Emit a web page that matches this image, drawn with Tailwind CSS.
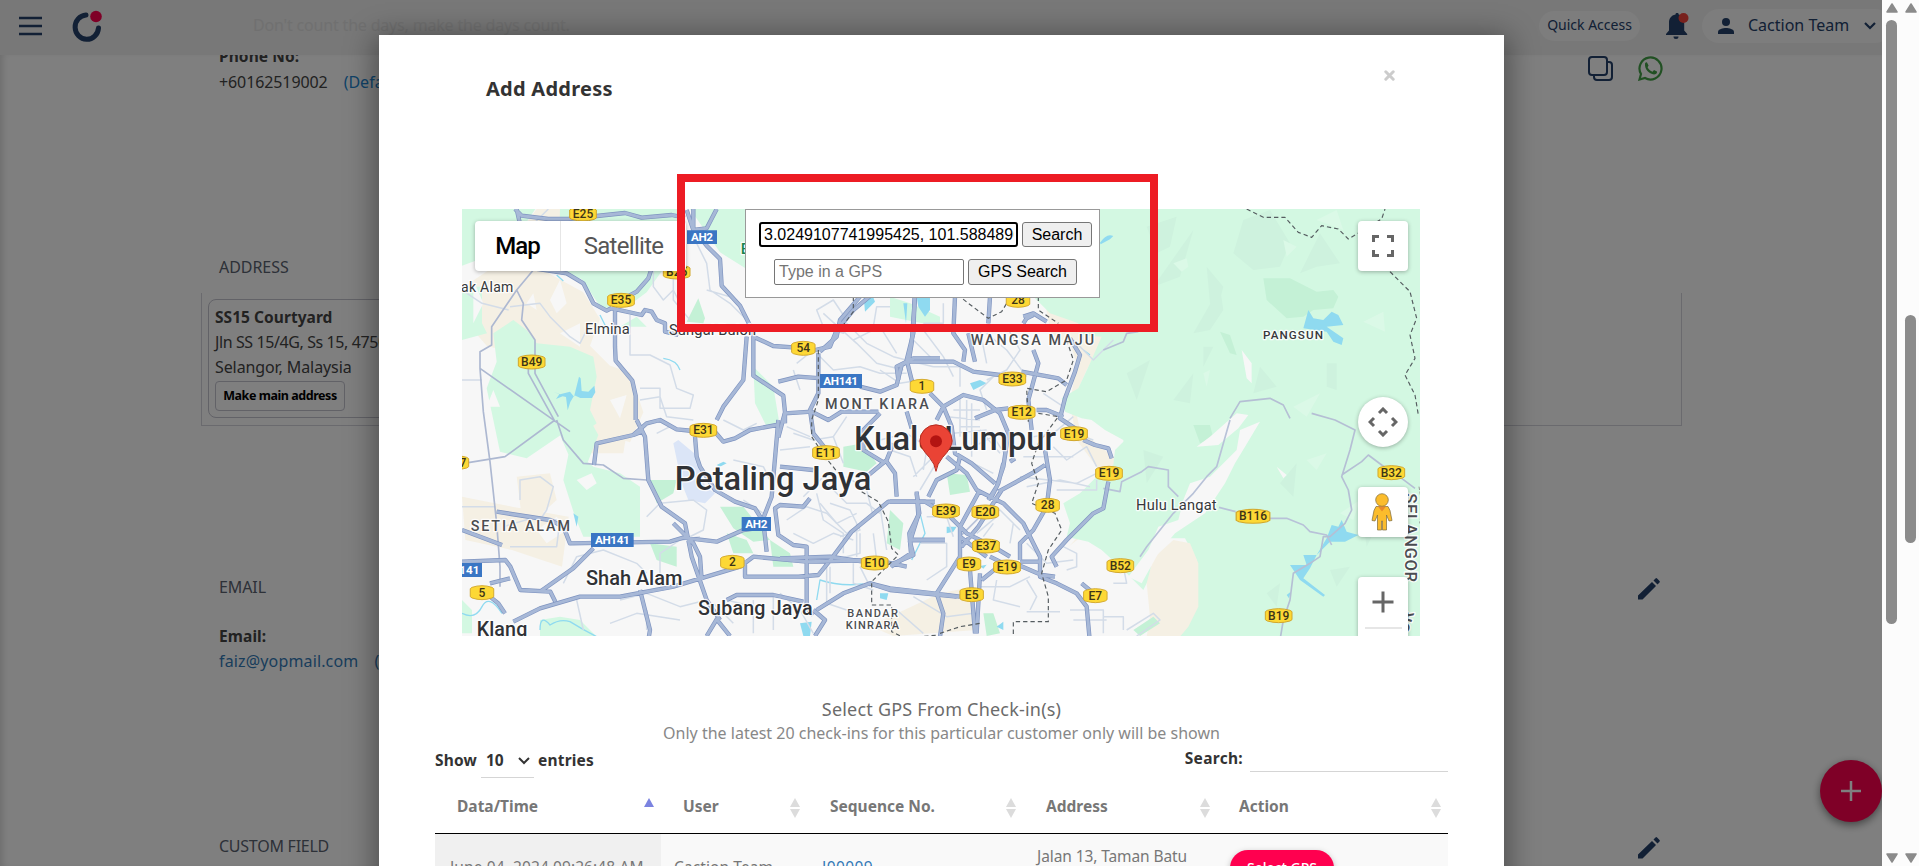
<!DOCTYPE html>
<html lang="en">
<head>
<meta charset="utf-8">
<title>Add Address</title>
<script src="https://cdn.jsdelivr.net/npm/@tailwindcss/browser@4"></script>
</head>
<body class="relative h-[866px] w-[1919px] overflow-hidden bg-white font-['Noto_Sans',sans-serif] text-base text-[#444]">
<div class="flex h-full">
  <div class="relative h-full w-[1882px] overflow-hidden bg-white">
    <!-- Page header -->
    <header class="flex h-[55px] items-center bg-[#f0f0f0] text-[#24406a]">
      <svg class="ml-[19px] mt-[-3px] h-5 w-[23px] shrink-0" viewBox="0 0 23 20"><path d="M0 2h23M0 10h23M0 18h23" stroke="#24406a" stroke-width="2.6"/></svg>
      <svg class="ml-[29px] mt-[-3px] h-[32px] w-[32px] shrink-0" viewBox="0 0 32 32"><path d="M15 5A11.7 12.2 0 1 0 27.5 18" fill="none" stroke="#24406a" stroke-width="5" stroke-linecap="round"/><circle cx="25" cy="6.5" r="5.8" fill="#ff004f"/></svg>
      <div class="ml-[150px] mt-[-5px] w-[1286px] shrink-0 whitespace-nowrap text-base tracking-[-0.18px] text-[#e1e1e1]">Don't count the days, make the days count.</div>
      <div class="mt-[-4px] flex h-[30px] w-[101px] shrink-0 items-center justify-center rounded-full bg-[#fafafa] pb-[2px] text-[14px]">Quick Access</div>
      <svg class="ml-[25px] mt-[-2px] h-[27px] w-[24px] shrink-0" viewBox="0 0 24 27"><path d="M10.500 1.500a1.600 1.600 0 0 1 3.200 0c4 1 5.500 4 5.500 8v8l3 3.500v1H1v-1l3-3.500v-8c0-4 2-7 6.500-8zM8.500 23.500h5a2.500 2.500 0 0 1-5 0z" fill="#24406a"/><circle cx="18.500" cy="5" r="5" fill="#f0433a"/></svg>
      <div class="ml-[13px] mt-[-3px] flex h-[34px] w-[190px] shrink-0 items-center rounded-full bg-[#fafafa] pl-[16px] whitespace-nowrap">
        <svg class="h-4 w-4" viewBox="0 0 16 16" fill="#24406a"><circle cx="8" cy="4" r="4"/><path d="M0 16v-2c0-3 5-4 8-4s8 1 8 4v2z"/></svg>
        <span class="ml-[14px] pb-[2px]">Caction Team</span>
        <svg class="ml-[15px] h-3 w-3" viewBox="0 0 12 12"><path d="m1 3 5 5 5-5" fill="none" stroke="#24406a" stroke-width="2.200"/></svg>
      </div>
    </header>
    <!-- Customer details -->
    <main class="flex h-[811px] justify-between overflow-hidden pl-[201px] shadow-[inset_6px_0_6px_-3px_#ddd]">
      <div class="w-[1481px] shrink-0 whitespace-nowrap">
        <div class="mt-[-11px] h-6 pl-[18px] text-[15.500px] font-bold leading-6 tracking-[0.080px]">Phone No:</div>
        <div class="flex h-[27px] items-center gap-4 pl-[18px]"><span class="tracking-[-0.1px]">+60162519002</span><span class="text-[#2185d0]">(Default)</span></div>
        <div class="mt-[160px] pl-[18px] leading-6 tracking-[-0.050px] text-[#5a6270]">ADDRESS</div>
        <div class="mt-[14px] h-[133px] border border-t-0 border-[#d5d5dc] pl-[6px] pt-[6px]">
          <div class="h-[119px] w-[600px] rounded-[8px] border border-[#c4c4cf] pl-[6px] pt-[5px] leading-[25px]">
            <div class="text-[15.500px] font-bold tracking-[0.050px]">SS15 Courtyard</div>
            <div class="tracking-[-0.400px]">Jln SS 15/4G, Ss 15, 47500</div>
            <div class="tracking-[-0.100px]">Selangor, Malaysia</div>
            <div class="mt-px flex h-[30px] w-[130px] items-center justify-center rounded border border-[#c4c4cf] pb-px text-[12.500px] font-bold tracking-[-0.450px] text-black">Make main address</div>
          </div>
        </div>
        <div class="mt-[149px] pl-[18px] leading-6 tracking-[-0.100px] text-[#5a6270]">EMAIL</div>
        <div class="mt-[25px] pl-[18px] text-[15.500px] font-bold leading-6 tracking-[0.100px]">Email:</div>
        <div class="flex gap-4 pl-[18px] pt-px leading-[25px] text-[#337ab7]"><span class="tracking-[0.150px]">faiz@yopmail.com</span><span>(Default)</span></div>
        <div class="mt-[160px] pl-[18px] leading-6 tracking-[-0.250px] text-[#5a6270]">CUSTOM FIELD</div>
      </div>
      <div class="relative w-[300px] shrink-0">
        <div class="absolute left-[-94px] top-[1px] flex gap-[25px]">
          <svg class="h-[25px] w-[25px]" viewBox="0 0 25 25" fill="none" stroke="#24406a" stroke-width="2"><rect x="1" y="1" width="18" height="18" rx="3"/><path d="M19 6h2q3 0 3 3v12q0 3-3 3H9q-3 0-3-3v-2"/></svg>
          <svg class="h-[25px] w-[25px]" viewBox="0 0 25 25"><path d="M1.500 23.500 3 18A11 11 0 1 1 7 22z" fill="none" stroke="#43a047" stroke-width="2.200"/><path d="M7 8c0-1 1-2 2-1.500l1.600 3-1 1.700c1 2 2.700 3.500 5 4.500l1.400-1.700 3 1.400c.5 2-1.500 3-3 3C11 18 6.500 13 7 8z" fill="#43a047"/></svg>
        </div>
        <svg class="absolute left-[-45px] top-[522px] h-[24px] w-[24px]" viewBox="0 0 24 24" fill="#24406a"><path d="M1 18.500 15 5l4 4L5.500 22.500H1zM16.500 3.500l2-2q.8-.8 1.600 0l2.400 2.400q.8.800 0 1.600l-2 2z"/></svg>
        <svg class="absolute left-[-45px] top-[781px] h-[24px] w-[24px]" viewBox="0 0 24 24" fill="#24406a"><path d="M1 18.500 15 5l4 4L5.500 22.500H1zM16.500 3.500l2-2q.8-.8 1.600 0l2.400 2.400q.8.800 0 1.600l-2 2z"/></svg>
      </div>
    </main>
    <div class="absolute left-[1820px] top-[760px] flex h-[62px] w-[62px] items-center justify-center rounded-full bg-[#ff004f] shadow-[0_3px_8px_#888]">
      <svg class="h-[20px] w-[20px]" viewBox="0 0 20 20"><path d="M10 0v20M0 10h20" stroke="#fff" stroke-width="2.500"/></svg>
    </div>
    <div class="absolute inset-0 bg-black/50"></div>

    <!-- Modal -->
    <section class="absolute left-[379px] top-[35px] h-[900px] w-[1125px] bg-white shadow-[0_5px_28px_4px_rgba(0,0,0,0.4)]">
      <div class="flex h-[174px] justify-between pl-[107px] pr-[109px]">
        <h2 class="mt-[40px] text-[20px] font-bold leading-7 tracking-[0.250px] text-[#333]">Add Address</h2>
        <svg class="mt-[35px] h-[11px] w-[11px]" viewBox="0 0 11 11"><path d="m1.800 1.800 7.400 7.400M9.200 1.800 1.800 9.200" stroke="#ccc" stroke-width="3" stroke-linecap="round"/></svg>
      </div>
      <div class="relative ml-[83px] h-[427px] w-[958px] overflow-hidden font-[Roboto,sans-serif]">
        <svg class="h-full w-full" viewBox="6 27 2874 1281" fill="none" stroke-linejoin="round">
          <defs>
            <g id="main">
              <path d="M165 27l20 20 80 10h60l170-18 50 14 90-8 40 8M170 27l10 45M220 205l100 15 50 30 30 60 40 22 15-8M575 205l-10 30-35 40-55 30M465 320v120l2 42 50 60 10 45v73M455 325l90 20 10-15 20 5 15 25 25 10 0 25 40 10M680 30l20 60 40-5 30-58M700 27v60l40 50 40 40 5 80 55 60 40 80v130l90 60 5 50-20 75M860 410l-10 130-60 80-20 40M880 410l60 28 70 5M1065 450l45-10 20-50 50-60 60-50M1365 290l-10 140-10 60M955 545l60-15 70 5M1200 560l60 15 50-20 15-60 35-20 80 0"/>
              <g transform="translate(0 660)"><path d="M530 0l25 50 10 130 40 80 70 50 20 100 45 130 40 60M520 45l40-35 40-10 50 28 50 5M545 35l-25 10-110 25-8 65M705 50l5 60 10 30 45 70 60 35 60 20 25 40 10 90M760 30l30 35 35-10 45-25 80-15M955 0l-20 230-35 90M960 140l100 10M1220 170l60-50 20-50M1280 125l25 35 5 70M1050 235l-20 25-70-5-15 10 10 80 45 30 40 5v185l20 20M6 330l120 45M110 275l160 25 40 20 20 50 300-5 40-12 100 12 80-35 70-10M6 425l130-5 15 20 30 70 90 5 15 30M90 490l60-15M90 530l25 20 20 30M160 605l80-40 120-35 120 0 160-30 200-60 40-30 160 15 210-5 90 20M400 385l-60 60-100 70M540 510l30 120-5 30M640 310l60 60 20 40 5 70M800 540l30-15 110 0 90 20M740 648l30-50 40 50M1070 570l80-50 80-30 60 20 200 20M1060 570l35 30-30 48M855 420v50l160 0 60-5 40-50 60-80 110-90 140 0M1355 360l100 0M1370 220l8 60-30 60 5 60-60 40"/></g>
              <g transform="translate(960 270)"><path d="M240 20l-60 70-10 50-50 45M115 190v120l-25 50 10 70 40 50M404 20l-4 110-20 80 15 60 10 30M525 20l-5 110 35 50-5 35M630 20l-5 80M565 130l20 85M355 270l-5-40 30-15 140 0 60 30 80 10M730 80l30-10 40 25M760 75l-20 10-10 15M870 145l30 50-15 50-30 80-15 60 60 40M760 180l15 40-30 110 10 90M725 245l110 20 25 20M770 360h30l50 20M585 385l60-25 40-5M450 310l40 40 25 60 10 80 50 30 70 60M470 390l20-40 60-35 60 15 50 40 25 60-15 100-20 60-25 40M910 450l35 15 40 10 10 30M985 575l-15 80-30 15-80 80-45 50 15 30M540 500l-10 40-60 30-25 50M500 500l60 50 30 50 80 40 60 60 50 100 0 60 50 20 60 30 30 40 10 110M600 600l-60 110 0 90-70 110 20 60-10 70M665 600l-70 110-50 60M540 740l80 60M670 520l-15 60-20 40M690 515l15-10M795 480l15 90-10 80-40 70-40 40 0 50M655 605l110-60 30-20M330 635h105l25 15M410 605l5 70-25 80 10 40-70 30M510 680l50 50 80 40 50 30M570 840l15 190M600 850l-10 180M605 870l50-40 60-5 70 30 40 5M720 815h60M630 800l60 30M395 750h100M0 805l150-5 100 15M270 880l60 15 130 15 80 10M15 400l0-30 80-5 50 25 40-25 110 0M380 365l15 50M300 370l-50 50 0 60 65 40M905 880l60 50"/></g>
            </g>
            <g id="shield"><path d="M-34-16Q0-26 34-16L40-12V12L34 16Q0 26-34 16L-40 12V-12Z" fill="#fdd835" stroke="#d2a72c" stroke-width="3"/></g>
          </defs>
          <path d="M0 20h2900v1300H0z" fill="#f7f7f7"/>
          <!-- Sandy ground -->
          <g fill="#f5f0e4">
            <path d="M230 27h120l-10 60-80 130 110 60 50 80-30 80 60 60 60 20 40 120-40 90-130-40 20-150-180-60-140-40-70-80 6-100 90-60zM6 890l150 30 170 30-20 150-150-50-140-30zM1100 27h400v200h-200zM170 830l100-10 20 80-100 90zM350 680l150 20-10 60-130 0z"/>
            <path d="M1750 280l80 60 100 20 0 60-50 90-40 90 20 90 100 80 60 80-40 80-90 60-90 70-20-60 60-140-20-200zM1440 1180l100-20 10 130-250 18-70-30z"/>
          </g>
          <path d="M1760 400l70 30 20 60-20 120 20 110 60 80 30 90-60 90-80 90h-80V400z" fill="#f7f7f7"/>
          <!-- Woods and parks -->
          <g fill="#d3f8e2">
            <path d="M1910 20h970v1300h-730l20-70 40-60v-110l-35-65-50 0-50 60-5 55-20 40-60-60-65-60-40-25-65-15 10-40-20-60 50-30 50-50 50-35 5-45 25-25V720l-55-30-40-30-30-5-50-20-10-40 50-30 35-75 35-80-65-5-5-35-85-30-60-60z"/>
            <path d="M6 27h220l-40 60-45 20-80 70-55 20zM6 260l60 0 0 110 15 30-75 20zM300 27h370l-60 180-50 70-40 30-95 20-60-90-70-20zM100 400l60-40 40 30 30 40 100 10 70 30 10 60-20 100 20 40-40 30-60 0-110 75-80-20-40-190 30-80zM270 660h120l25 45-35 90-50-20-30-70zM330 740l70 60 80 20 60 40v150H370l-25-60-35-110z"/>
            <path d="M880 500l60 60 20 120-40 0-35-70zM690 27h170v180l-80-50zM480 380l50-30 30 30zM240 1260l60-10 60 10 50 50H240zM6 1200l30 30v70H6zM1290 290l60 20 90 40 0 30-150-30z"/>
          </g>
          <path d="M2060 1150l20-75 60-55 50 10 25 60v130l-30 60-25 30-100 0 10-60z" fill="#f5f0e4"/>
          <g fill="#c4f1d6">
            <path d="M715 295l20 60-5 15-50-5zM570 840h80l-10 40-50 30zM780 920l70 0 80 100-50 5-60-40zM800 1000l60 20 20 40-60 0zM570 1030l80 10 0 60-60-20zM930 1020l60 40 10 40-60 0zM1150 740l60-10 40 60-30 25-70-15zM1290 930l40 40-10 80-40-20z"/>
            <path d="M2410 235l80 0 80 40 50-5 15 20-15 35-60 5-30 20-50 5-60-55zM2280 395l30 10 20 60-20-5zM2200 675l50 0 10 40-40 15zM1460 820l60 5 10 50-60 10zM2020 1290l60-40 20 20-60 38zM1570 1240l30 0 20 60-40 8z"/>
          </g>
          <!-- Relief shading -->
          <g fill="#cef2de">
            <path d="M2060 80l90-30-20 90-40 20zM2080 260l120-170-40 140zM2240 200l50 60-20 80-20-30zM2200 400l80-140 10 70-40 60zM2350 60l80-30 60 100-30 70-80 10-60-50zM2520 220l60-120 60 90-70 10zM2000 520l70-40-40 120zM2140 600l60-80-10 90zM2230 440l30 0-30 60zM2400 500l50 60-70 20zM2600 490l30 0 0 80-30-10zM2050 750l60 20-50 80zM2700 900l60 60-40 80zM2460 850l50-60-10 100zM2610 1110l60-10-40 60zM2420 1180l40-30-10 70z"/>
          </g>
          <g fill="#dbf9e7">
            <path d="M2140 190l40-15 5 25-20 15zM2470 120l40 20-30 30zM2570 60l60-30 20 60zM2710 365l60-30 5 60zM2500 620l80-40-40 70zM2540 780l60-20-30 50zM2230 520l20-10-10 50zM2640 940l60-40-20 60z"/>
          </g>
          <path d="M2170 900l20-50 60-20 80-80 10-60 60-25-15 25-30 50-30 50-30 60-60 90-90 60-50 60-50 90-40-20 60-80 30-70 60-20zM2210 740l40-30 80-70 35 5-30 40-60 50zM2345 450l30 40v60l-15-15zM2450 800l30 25-10 10z" fill="#f7f7f7"/>
          <path d="M200 310l20-30 10 50zM270 300l30-60 20 70-30 30zM300 400l60-30 0 70zM40 240l30 70-30 60zM450 600l50-15-20 70zM350 840l45-20 15 30-30 20zM230 990l60-40 30 40-60 40zM100 570l20 50-40 0z" fill="#f7f7f7"/>
          <path d="M640 730l15-10 60 50 20 90 30 20-30 30-50-10-20-50z" fill="#dbe5f7"/>
          <!-- Water -->
          <g fill="#8fdaf0">
            <path d="M280 575l20 8 30-8 12 15 15-60 5 5 3 38 20 2 18-18 3 20-10 17-35 0-18-8-12 20-8 25-5-40-10-2-20 8 10-14zM340 940l15 10-5 30zM1020 1270l35-5-5 43h-20zM1210 280l25 0 10 25-30 30zM1330 310l12 0-4 60zM1370 290l40 0 0 40-15 20-20-30zM770 795l20-10 10 5-20 10z"/>
            <path d="M2545 330l15 25 30 5 25-25 20 10 15 30-50 5 50 35-5 20-25-10-20-30-70-10z"/>
            <path d="M2490 1095l50 0-10-30 40 0 30-50 15-40 20 5 10-20 15 35 35 10-40 20-45 0-40 40-20 40-20 30 65 50-5 5-70-50zM2480 1185l12-10-5 20zM1530 550l30-10 20 10-40 20zM1610 1280l20-15 0 25zM1460 980l30 0-10 15-20 5zM1560 1098l20-4-10 12zM1920 128q20-30 40-20l-10 10-28 15zM1260 1180l25 0-5 20-20-5z"/>
          </g>
          <path d="M610 475q40 5 50 35M290 225l20 18M420 345l30 60M6 1240q40 20 60-20t60 20M240 1290q0-50 30-15 30-20 60-10 40 25 80 45M1070 1200l10-60q60 20 130 12M1380 940l15 60-40 80M1870 450l20 15" stroke="#8fdaf0" stroke-width="4"/>
          <!-- Minor streets -->
          <g stroke="#d3dce8" stroke-width="4.500">
            <path d="M265 27l-40 40M580 200l0 60 30 40 30-30 30 60M510 345l0 120 60 0 60 30 20 70 50 20-10 40-90 0 0-60-60 0M150 320l90-10 30 40 60 60 30 20 20-40M6 270l60 40 80 20M6 540h60M700 110l40 80 10 80 60 40 60 60M640 200l0 100 50 60M740 270l70 20M1070 330l50-30 40 60-10 40-60-20zM1010 490l50-40 60 60 80-10 60 20 80 0M1020 570l-20-60M1090 340l100 90 60 60 80 20M1240 380l10-60 40 0M1180 420l80-40 50 80M540 600l60-10 20 60 80 10"/>
            <path d="M6 920h100M130 980l100-30 60 10M150 1040h140l10-80M180 900v-60l60-10 40 30-20 70-20 30M310 1150l40-80 80-20 100 40 30 30M350 1200l20 90M480 1200l80-20 100 40 80-20M450 1270l80-30 130 20M600 1150v-90l60-40 60-10M560 950l40-40 100-10 40 30-10 60-60 30M760 1210l60 60M820 780l90 20 30 60M850 900l60 40M790 660l60 30 40-20M590 700l40-20M870 990l60-20M1000 700l60 20 60-10M980 960l60-40 60 20 60 60 60-40M1070 880l20 80 60 40 0 60M1000 1000l60 30 60-30 60 20M1100 850l60 60 60 0 40 30M1200 1000l0 60-80 20M1240 1000l10 80M1100 1080l0 130 60 20M880 1200l0 100M940 1190l0 100M800 1200l80 20M960 1180l60 50 40 70M560 1230l0 60"/>
            <path transform="translate(960 270)" d="M200 100l60 60 80 40 120 30M430 120l60 80 30 60M400 150l60 60M460 230l80 0 0 60M540 320v120M520 360h80M500 380l100 10M540 410l60 0M520 430l100-10M560 330v150M575 340v160M500 420l-60 60-10 60M440 470l80-40M300 240l60 40 60-10M300 450l80-20 60 40M330 480l60 20 20 60M400 560l60-60 20 20M420 600l60-100M560 480l80-40 40 60M600 420l60 70M580 520l60 30M640 260l-40 40 20 60M620 130l60 50 60 80M600 120l20 100M680 110l40 70-40 60-60 30M760 440l60-10 60-50M730 500h150M720 560l170 20 60-30M740 590l100-20 90 20M830 600l120 0 0-30M820 470l40 40 60-40 30 60M850 420l90 30M200 560l60 40 20 80M150 640l60 20 30 60-60 20M120 640l50 60 60-30M230 700v100M300 650l20 130M420 760l80 0v70l-60 40M440 680l60 0 20 60M570 650l30 30 60-20 60 60M590 730l60-50M640 700l-30 40M660 660l40 40-10 60M740 760l60 60 80-10M850 770l40 20 0 40-30 10M600 890h90l60-30M650 870l-10 60 80 20M740 870l30 50-20 40M150 830v80M220 820l0 60 60 20M240 830l30 60M350 960l80 70M400 920l100 60 80-10M20 410l70 30M0 480l90-10M200 380l-40 60 30 80M130 560l-60 60M430 100l60 0 0-60M880 150l60 60 60-60M790 310l60 40"/>
            <path d="M1830 1230l100 0 0 70M1840 1260l100 0M1700 1235h100M1960 1150l40 0-10-50M2000 1290l80-50 20 20-70 48M1930 1250l60 0 0 40"/>
          </g>
          <!-- Secondary roads -->
          <g stroke="#adb8d1" stroke-width="5">
            <path d="M220 210l-50 60-75 110 0 55-35 20 0 50 10 130 20 150 20 185 10 130 0 60M170 270l20 40-5 50 40 60v100l70 130M205 490v30l80 145M60 505l270 190M285 660l-150 110-110 18M290 660l20 60 60 70 60 5 60 40 70 5"/>
            <path d="M1500 1010l60-60M1930 865l50 10 5-30 60-30 20-15 60 10 0 50 30 30M2310 660l-40 140-30 30-40 50-60 60-80 100-20 30M2277 922l50 13M2430 955l50 0 50 20 20 20 50 10 15 30" stroke="#b8c2d8"/>
            <path d="M2555 640l70 20 60 30-15 60-25 80 20 40 10 60-20 40-45 40-20 0-10 60-30 20-50 30-10 80-20 60-10 60-20 60M2645 825l60-40 20-20 40 30 60 40 40 30M1930 450l60-25 10-25 35-5M2310 655l30-50 90-10 40 20 20 40" stroke="#b5bfd4"/>
          </g>
          <use href="#main" stroke="#7f94c0" stroke-width="13"/>
          <use href="#main" stroke="#a7b8d7" stroke-width="9"/>
          <!-- Boundaries -->
          <g stroke="#555c60" stroke-width="3.500" stroke-dasharray="13 9">
            <path d="M1180 290l0 45-30 40M1075 450l0 150-20 60 0 50 40 60 40 50M1205 875l50 30 30 60 10 80 20 20-80 80 0 70 60 0 0 80 40 20 100-10M1475 270l50 40 60 45 40-20 30-50M1735 290l0 40 60 40M1820 420l20 60-20 60-60 35-60-10 5 100M1735 640l60 10-60 80-20 60 20 60-20 60 70 30 20 50-40 60-20 70 20 70v75h-105v75M1440 1300l60-20 60-10"/>
            <path d="M2360 27l50 25 65 0 40 45 40 15 30-35 50 10 30 30 100-60 10-30M2790 215l60 60 20 80-20 50 15 70-30 50 30 60 10 60"/>
          </g>
          <path d="M2877 860l10 60-8 50" stroke="#999" stroke-width="3" stroke-dasharray="10 5"/>
          <!-- Route shields -->
          <g font-size="36" font-weight="500" fill="#3c3417" text-anchor="middle" font-family="Roboto,sans-serif">
            <g transform="translate(369 42)"><use href="#shield"/><text y="12">E25</text></g>
            <g transform="translate(650 216)"><use href="#shield"/><text y="12">B25</text></g>
            <g transform="translate(483 301)"><use href="#shield"/><text y="12">E35</text></g>
            <g transform="translate(215 486)"><use href="#shield"/><text y="12">B49</text></g>
            <g transform="translate(1030 445)"><use href="#shield" transform="scale(.88 1)"/><text y="12">54</text></g>
            <g transform="translate(1386 559)"><use href="#shield" transform="scale(.88 1)"/><text y="12">1</text></g>
            <g transform="translate(730 691)"><use href="#shield"/><text y="12">E31</text></g>
            <g transform="translate(1098 758)"><use href="#shield"/><text y="12">E11</text></g>
            <g transform="translate(-14 788)"><use href="#shield"/><text x="23" y="12">7</text></g>
            <g transform="translate(817 1087)"><use href="#shield" transform="scale(.88 1)"/><text y="12">2</text></g>
            <g transform="translate(1244 1089)"><use href="#shield"/><text y="12">E10</text></g>
            <g transform="translate(66 1178)"><use href="#shield" transform="scale(.88 1)"/><text y="12">5</text></g>
            <g transform="translate(1674 301)"><use href="#shield" transform="scale(.88 1)"/><text y="12">28</text></g>
            <g transform="translate(1657 537)"><use href="#shield"/><text y="12">E33</text></g>
            <g transform="translate(1685 637)"><use href="#shield"/><text y="12">E12</text></g>
            <g transform="translate(1842 701)"><use href="#shield"/><text y="12">E19</text></g>
            <g transform="translate(1947 820)"><use href="#shield"/><text y="12">E19</text></g>
            <g transform="translate(1763 916)"><use href="#shield" transform="scale(.88 1)"/><text y="12">28</text></g>
            <g transform="translate(1458 933)"><use href="#shield"/><text y="12">E39</text></g>
            <g transform="translate(1576 936)"><use href="#shield"/><text y="12">E20</text></g>
            <g transform="translate(1578 1038)"><use href="#shield"/><text y="12">E37</text></g>
            <g transform="translate(1527 1092)"><use href="#shield" transform="scale(.88 1)"/><text y="12">E9</text></g>
            <g transform="translate(1641 1101)"><use href="#shield"/><text y="12">E19</text></g>
            <g transform="translate(1535 1184)"><use href="#shield" transform="scale(.88 1)"/><text y="12">E5</text></g>
            <g transform="translate(1906 1187)"><use href="#shield" transform="scale(.88 1)"/><text y="12">E7</text></g>
            <g transform="translate(1981 1097)"><use href="#shield"/><text y="12">B52</text></g>
            <g transform="translate(2379 949)"><use href="#shield" transform="scale(1.26 1)"/><text y="12">B116</text></g>
            <g transform="translate(2794 818)"><use href="#shield"/><text y="12">B32</text></g>
            <g transform="translate(2456 1247)"><use href="#shield"/><text y="12">B19</text></g>
          </g>
          <g fill="#3a76c4"><path d="M681 91h90v41h-90zM1080 522h126v42h-126zM393 999h128v42H393zM845 951h88v42h-88zM-60 1089H66v42H-60z"/></g>
          <g font-size="35" font-weight="700" fill="#fff" text-anchor="middle" font-family="Roboto,sans-serif">
            <text x="726" y="123" textLength="66">AH2</text><text x="1142" y="555" textLength="104">AH141</text><text x="457" y="1032" textLength="104">AH141</text><text x="889" y="984" textLength="66">AH2</text><text x="28" y="1122">141</text>
          </g>
          <!-- Place names -->
          <g font-family="Roboto,sans-serif" fill="#36383b" stroke="#fff" stroke-width="8" paint-order="stroke" stroke-opacity=".85">
            <text x="3" y="276" font-size="42" textLength="157">ak Alam</text>
            <text x="375" y="402" font-size="44" textLength="134">Elmina</text>
            <text x="627" y="405" font-size="44" textLength="261">Sungai Buloh</text>
            <text x="842" y="163" font-size="46" fill="#17844f" font-weight="500">B</text>
            <text x="2028" y="930" font-size="44" textLength="242">Hulu Langat</text>
            <g font-weight="500">
              <text x="1095" y="628" font-size="43" textLength="311" fill="#4b4d51">MONT KIARA</text>
              <text x="1532" y="435" font-size="43" textLength="370" fill="#4b4d51">WANGSA MAJU</text>
              <text x="2409" y="416" font-size="35" textLength="180" fill="#36383b">PANGSUN</text>
              <text x="32" y="994" font-size="43" textLength="298" fill="#4b4d51">SETIA ALAM</text>
              <text x="1162" y="1251" font-size="33" textLength="152" fill="#4b4d51">BANDAR</text>
              <text x="1157" y="1286" font-size="33" textLength="160" fill="#4b4d51">KINRARA</text>
              <text x="378" y="1155" font-size="60" textLength="289" fill="#303236">Shah Alam</text>
              <text x="714" y="1245" font-size="59" textLength="344" fill="#303236">Subang Jaya</text>
              <text x="50" y="1309" font-size="59" textLength="152" fill="#303236">Klang</text>
              <text x="644" y="870" font-size="98" textLength="590" fill="#303236">Petaling Jaya</text>
              <text x="1182" y="750" font-size="98" textLength="606" fill="#303236">Kuala Lumpur</text>
              <text transform="translate(2836 880) rotate(90)" font-size="50" textLength="266" fill="#4b4d51">SELANGOR</text>
              <text transform="translate(2842 1304) rotate(-72)" font-size="52" fill="#4b4d51">OR</text>
            </g>
          </g>
          <!-- Pin -->
          <path d="M1428 814q-3-22-20-42-28.500-30-28.500-49a48.500 48.500 0 0 1 97 0q0 19-28.500 49-17 20-20 42z" fill="#ea4335" stroke="#b52b20" stroke-width="3"/><circle cx="1428" cy="724" r="18" fill="#b31412"/>
        </svg>
        <!-- Map type control -->
        <div class="absolute left-[13px] top-[12px] flex h-[50px] items-center rounded-sm bg-white text-[24px] shadow-[0_1px_4px_rgba(0,0,0,0.300)]">
          <span class="flex h-full w-[86px] items-center justify-center border-r border-[#e6e6e6] font-medium tracking-[-0.900px] text-black">Map</span>
          <span class="w-[125px] text-center tracking-[-0.700px] text-[#565656]">Satellite</span>
        </div>
        <!-- Map buttons -->
        <div class="absolute left-[896px] top-[12px] flex h-[50px] w-[50px] items-center justify-center rounded-sm bg-white shadow-[0_1px_4px_rgba(0,0,0,0.300)]">
          <svg class="h-6 w-6" viewBox="0 0 24 24" fill="none" stroke="#666" stroke-width="3"><path d="M2.500 8V2.500H8M16 2.500h5.500V8M21.500 16v5.500H16M8 21.500H2.500V16"/></svg>
        </div>
        <div class="absolute left-[896px] top-[188px] flex h-[50px] w-[50px] items-center justify-center rounded-full bg-white shadow-[0_1px_4px_rgba(0,0,0,0.300)]">
          <svg class="h-[30px] w-[30px]" viewBox="0 0 30 30" fill="none" stroke="#666" stroke-width="3"><path d="m11 6 4-4 4 4M11 24l4 4 4-4M6 11l-4 4 4 4M24 11l4 4-4 4"/></svg>
        </div>
        <div class="absolute left-[896px] top-[278px] flex h-[50px] w-[50px] items-center justify-center rounded-sm bg-white pr-[2px] shadow-[0_1px_4px_rgba(0,0,0,0.300)]">
          <svg class="h-[38px] w-[22px]" viewBox="0 0 22 38" fill="#fbbc2c" stroke="#7d6a3c" stroke-width=".7"><path d="M5 13.500h12l2 4 2 10-3 .5-2.500-6V37h-4v-9h-1v9h-4V22l-2.500 6-3-.5 2-10z"/><circle cx="11" cy="7" r="6.300"/><path d="M7 13.500h8l-4 5z" fill="#e8892a" stroke="none"/></svg>
        </div>
        <div class="absolute left-[896px] top-[368px] flex h-[100px] w-[50px] flex-col items-center rounded-sm bg-white shadow-[0_1px_4px_rgba(0,0,0,0.300)]">
          <svg class="mt-[14px] h-[22px] w-[22px] shrink-0" viewBox="0 0 22 22"><path d="M11 .5v21M.5 11h21" stroke="#666" stroke-width="3"/></svg>
          <div class="mt-[14px] h-[2px] w-[37px] bg-[#e6e6e6]"></div>
        </div>
        <!-- Search box -->
        <div class="absolute left-[283px] top-0 flex h-[89px] w-[355px] flex-col items-center border border-[#999] bg-white pl-[6px] font-['Liberation_Sans',sans-serif] text-[16px] text-black">
          <div class="mt-[12px] flex h-[25px] gap-1">
            <div class="w-[259px] rounded-[3px] border-2 border-black pl-[3px] pr-[2px] leading-[21px] whitespace-nowrap"><div class="overflow-hidden">3.0249107741995425, 101.58848966</div></div>
            <div class="flex w-[70px] items-center justify-center rounded-[3px] border border-[#767676] bg-[#efefef]">Search</div>
          </div>
          <div class="mt-[12px] flex h-[26px] gap-1">
            <div class="w-[190px] rounded-[2px] border border-[#767676] pl-[4px] leading-[24px] text-[#757575]">Type in a GPS</div>
            <div class="flex w-[109px] items-center justify-center rounded-[3px] border border-[#767676] bg-[#efefef]">GPS Search</div>
          </div>
        </div>
      </div>

      <div class="px-[56px]">
        <div class="mt-[60px] text-center text-[18px] leading-[26px] tracking-[0.200px] text-[#6b6b6b]">Select GPS From Check-in(s)</div>
        <div class="pt-px text-center text-[16px] leading-[20px] text-[#888]">Only the latest 20 check-ins for this particular customer only will be shown</div>
        <div class="flex h-[46px] justify-between text-[15.500px] font-bold text-[#333]">
          <div class="flex h-[35px] items-center">
            <span class="w-[46px] pt-px tracking-[0.200px]">Show</span>
            <span class="flex h-full w-[53px] items-center border-b border-[#d5d5d5] pl-[5px] pt-[2px]">10<svg class="ml-[14px] h-3 w-3" viewBox="0 0 12 12"><path d="m1 3 5 5 5-5" fill="none" stroke="#333" stroke-width="2"/></svg></span>
            <span class="ml-[4px] pt-px tracking-[0.200px]">entries</span>
          </div>
          <div class="flex h-[29px] items-center"><span class="pt-[2px] tracking-[0.300px]">Search:</span><span class="ml-[7px] h-full w-[198px] border-b border-[#d5d5d5]"></span></div>
        </div>
        <div class="grid h-[45px] grid-cols-[226px_146px_216px_194px_230px] border-b border-black text-[15.500px] font-bold text-[#777]">
          <div class="flex items-start justify-between pl-[22px] pr-[7px] pt-[6px]">Data/Time<svg class="mt-[3px] h-[20px] w-[10px]" viewBox="0 0 10 20"><path d="M0 9 5 0l5 9z" fill="#7b83e0"/></svg></div>
          <div class="flex items-start justify-between pl-[22px] pr-[7px] pt-[6px]">User<svg class="mt-[3px] h-[20px] w-[10px]" viewBox="0 0 10 20"><path d="M0 9 5 0l5 9zM0 11l5 9 5-9z" fill="#dcdcdc"/></svg></div>
          <div class="flex items-start justify-between pl-[23px] pr-[7px] pt-[6px]">Sequence No.<svg class="mt-[3px] h-[20px] w-[10px]" viewBox="0 0 10 20"><path d="M0 9 5 0l5 9zM0 11l5 9 5-9z" fill="#dcdcdc"/></svg></div>
          <div class="flex items-start justify-between pl-[23px] pr-[7px] pt-[6px]">Address<svg class="mt-[3px] h-[20px] w-[10px]" viewBox="0 0 10 20"><path d="M0 9 5 0l5 9zM0 11l5 9 5-9z" fill="#dcdcdc"/></svg></div>
          <div class="flex items-start justify-between pl-[22px] pr-[6px] pt-[6px]">Action<svg class="mt-[3px] h-[20px] w-[10px]" viewBox="0 0 10 20"><path d="M0 9 5 0l5 9zM0 11l5 9 5-9z" fill="#dcdcdc"/></svg></div>
        </div>
        <div class="grid h-[70px] grid-cols-[226px_146px_216px_194px_230px] bg-[#f9f9f9] text-[15.500px] leading-[24px] whitespace-nowrap text-[#777]">
          <div class="bg-[#f0f0f0] pl-[15px] pt-[21px] tracking-[0.100px]">June 04, 2024 09:26:48 AM</div>
          <div class="pl-[13px] pt-[21px] tracking-[0.100px]">Caction Team</div>
          <div class="pl-[15px] pt-[21px] tracking-[0.400px] text-[#337ab7]">J00009</div>
          <div class="pl-[14px] pt-[10px] tracking-[-0.100px]">Jalan 13, Taman Batu</div>
          <div class="pl-[13px] pt-[16px]"><div class="flex h-[36px] w-[104px] items-center justify-center rounded-full bg-[#ff004f] text-[14px] font-medium text-white shadow-[0_2px_6px_rgba(0,0,0,0.250)]">Select GPS</div></div>
        </div>
      </div>
    </section>
    <div class="absolute left-[677px] top-[174px] h-[158px] w-[481px] border-8 border-[#ed1c24]"></div>
  </div>

  <!-- Scrollbars -->
  <div class="flex w-[37px] shrink-0 gap-[8px] bg-[#fcfcfc] pl-[4px]">
    <div class="flex w-[11px] flex-col items-center justify-between py-[3px]">
      <svg class="h-[10px] w-[12px] shrink-0" viewBox="0 0 12 10"><path d="M6 1 11 9H1z" fill="#8b8b8b" stroke="#8b8b8b" stroke-width="1.500" stroke-linejoin="round"/></svg>
      <div class="mb-[229px] mt-[7px] w-[11px] grow rounded-full bg-[#8b8b8b]"></div>
      <svg class="h-[10px] w-[12px] shrink-0" viewBox="0 0 12 10"><path d="M6 9 11 1H1z" fill="#8b8b8b" stroke="#8b8b8b" stroke-width="1.500" stroke-linejoin="round"/></svg>
    </div>
    <div class="flex w-[11px] flex-col items-center justify-between py-[3px]">
      <svg class="h-[10px] w-[12px] shrink-0" viewBox="0 0 12 10"><path d="M6 1 11 9H1z" fill="#8b8b8b" stroke="#8b8b8b" stroke-width="1.500" stroke-linejoin="round"/></svg>
      <div class="mb-[310px] mt-[302px] w-[11px] grow rounded-full bg-[#8b8b8b]"></div>
      <svg class="h-[10px] w-[12px] shrink-0" viewBox="0 0 12 10"><path d="M6 9 11 1H1z" fill="#8b8b8b" stroke="#8b8b8b" stroke-width="1.500" stroke-linejoin="round"/></svg>
    </div>
  </div>
</div>
</body>
</html>
